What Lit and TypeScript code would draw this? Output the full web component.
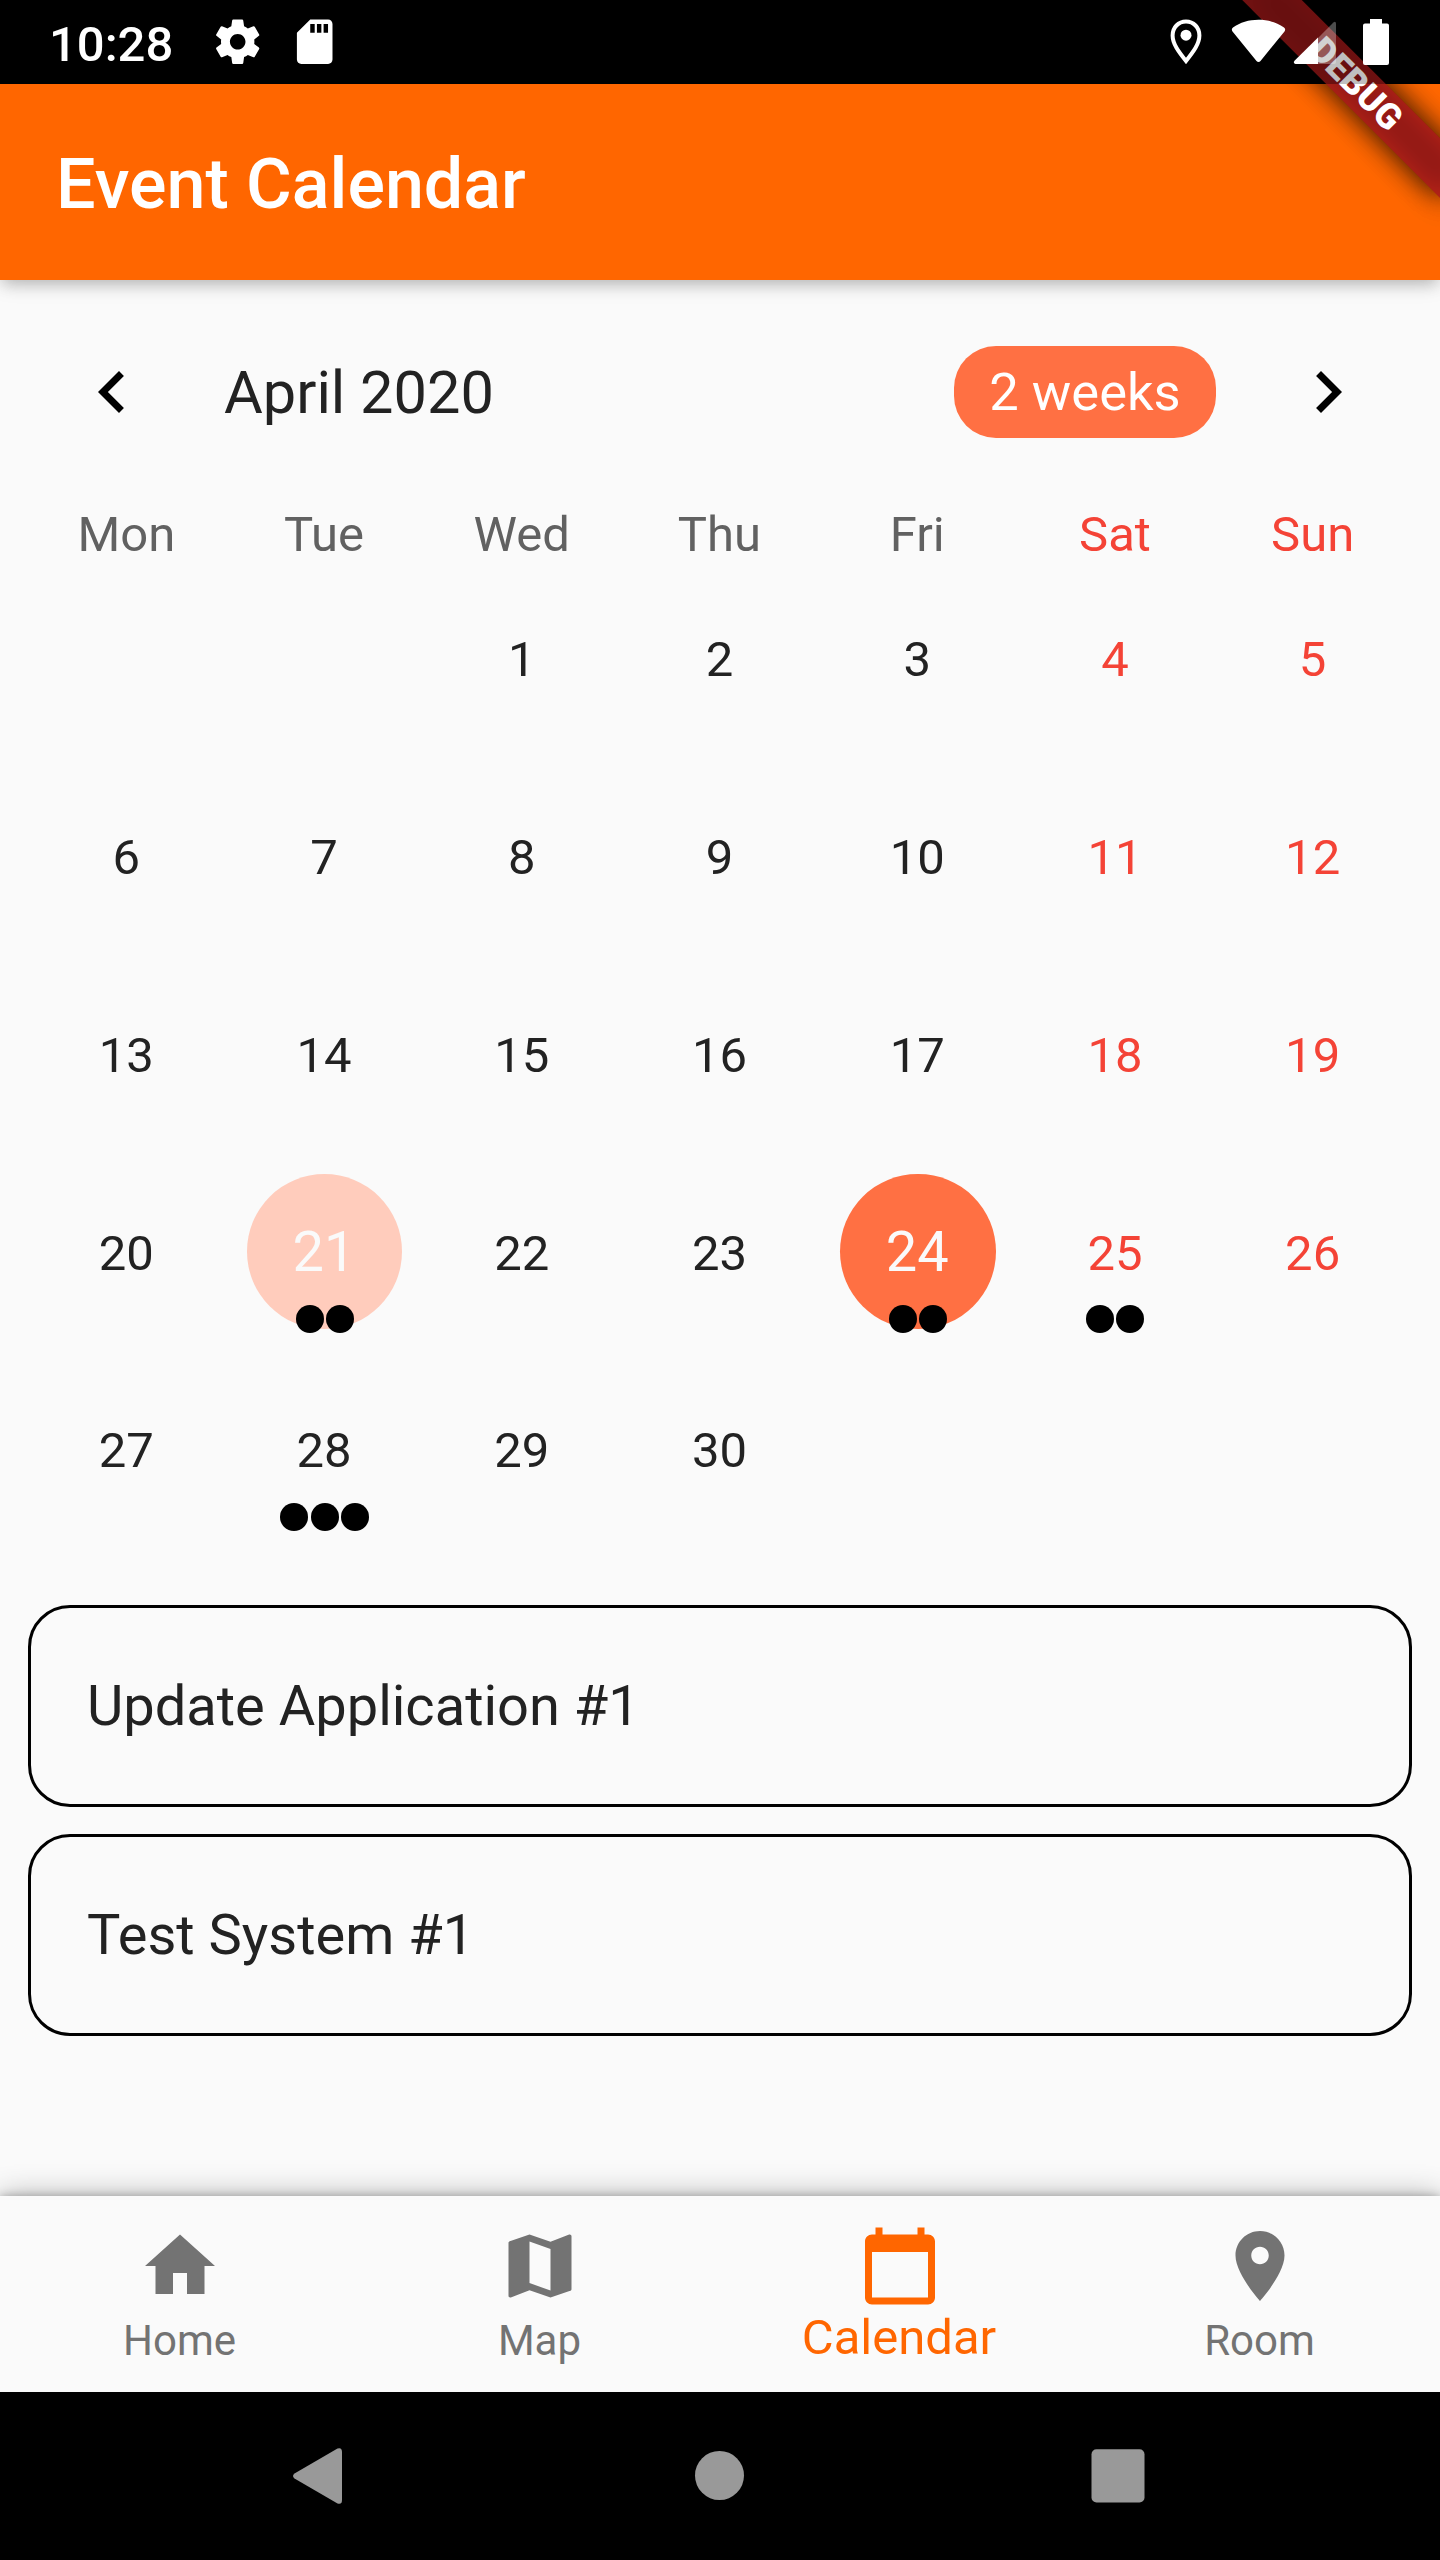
import { LitElement, html, css, svg } from "lit";
import { customElement, property } from "lit/decorators.js";
import { classMap } from "lit/directives/class-map.js";

const ICONS: Record<string, string> = {
  left: "M15.41 7.41L14 6l-6 6 6 6 1.41-1.41L10.83 12z",
  right: "M10 6L8.59 7.41 13.17 12l-4.58 4.59L10 18l6-6z",
  home: "M10 20v-6h4v6h5v-8h3L12 3 2 12h3v8z",
  map: "M20.5 3l-.16.03L15 5.1 9 3 3.36 4.9c-.21.07-.36.25-.36.48V20.5c0 .28.22.5.5.5l.16-.03L9 18.9l6 2.1 5.64-1.9c.21-.07.36-.25.36-.48V3.5c0-.28-.22-.5-.5-.5zM15 19l-6-2.11V5l6 2.11V19z",
  calendar: "M20 3h-1V1h-2v2H7V1H5v2H4c-1.1 0-2 .9-2 2v16c0 1.1.9 2 2 2h16c1.1 0 2-.9 2-2V5c0-1.1-.9-2-2-2zm0 18H4V8h16v13z",
  room: "M12 2C8.13 2 5 5.13 5 9c0 5.25 7 13 7 13s7-7.75 7-13c0-3.87-3.13-7-7-7zm0 9.5c-1.38 0-2.5-1.12-2.5-2.5s1.12-2.5 2.5-2.5 2.5 1.12 2.5 2.5-1.12 2.5-2.5 2.5z",
  settings: "M19.43 12.98c.04-.32.07-.64.07-.98s-.03-.66-.07-.98l2.11-1.65c.19-.15.24-.42.12-.64l-2-3.46c-.12-.22-.39-.3-.61-.22l-2.49 1c-.52-.4-1.08-.73-1.69-.98l-.38-2.65C14.46 2.18 14.25 2 14 2h-4c-.25 0-.46.18-.49.42l-.38 2.65c-.61.25-1.17.59-1.69.98l-2.49-1c-.23-.09-.49 0-.61.22l-2 3.46c-.13.22-.07.49.12.64l2.11 1.65c-.04.32-.07.65-.07.98s.03.66.07.98l-2.11 1.65c-.19.15-.24.42-.12.64l2 3.46c.12.22.39.3.61.22l2.49-1c.52.4 1.08.73 1.69.98l.38 2.65c.03.24.24.42.49.42h4c.25 0 .46-.18.49-.42l.38-2.65c.61-.25 1.17-.59 1.69-.98l2.49 1c.23.09.49 0 .61-.22l2-3.46c.12-.22.07-.49-.12-.64l-2.11-1.65zM12 15.5c-1.93 0-3.5-1.57-3.5-3.5s1.57-3.5 3.5-3.5 3.5 1.57 3.5 3.5-1.57 3.5-3.5 3.5z",
  sd: "M18 2h-8L4 8v12c0 1.1.9 2 2 2h12c1.1 0 2-.9 2-2V4c0-1.1-.9-2-2-2zm-6 6h-2V4h2v4zm3 0h-2V4h2v4zm3 0h-2V4h2v4z",
};

@customElement("md-icon")
class MdIcon extends LitElement {
  @property() name = "home";
  static styles = css`
    :host { display: block; width: 84px; height: 84px; }
    .glyph { display: block; width: 100%; height: 100%; fill: currentColor; }
  `;
  render() {
    return html`<svg class="glyph" viewBox="0 0 24 24"><path d=${ICONS[this.name]}></path></svg>`;
  }
}

@customElement("status-bar")
class StatusBar extends LitElement {
  static styles = css`
    :host {
      display: flex; height: 84px; box-sizing: border-box; flex: none;
      padding: 0 51px 0 49px; background: #000; color: #fff;
    }
    .left { display: flex; align-items: center; }
    .clock { font-size: 49px; font-weight: 500; line-height: 58px; width: 162px; padding-top: 5px; }
    .left md-icon { width: 53.4px; height: 53.4px; margin-right: 23.4px; }
  `;
  render() {
    return html`
      <div class="left">
        <span class="clock">10:28</span>
        <md-icon name="settings"></md-icon>
        <md-icon name="sd"></md-icon>
      </div>
    `;
  }
}

@customElement("signal-icons")
class SignalIcons extends LitElement {
  static styles = css`
    :host { display: block; width: 220px; height: 84px; }
    .art { display: block; }
  `;
  render() {
    return html`<svg class="art" width="220" height="84" viewBox="1170 0 220 84">
      ${svg`
        <path d="M1186 21.500c-7.600 0-13.400 6-13.400 14 0 8.500 6.200 16.500 13.400 25.500 7.200-9 13.400-17 13.400-25.500 0-8-5.800-14-13.400-14z" fill="none" stroke="#fff" stroke-width="4"></path>
        <circle cx="1186" cy="35.200" r="5.500" fill="#fff"></circle>
        <path d="M1258.500 19.800c-9.500 0-18.500 2.700-25.500 7.700-1.400 1-1.500 2.600-.5 3.900l24 29.600c1.100 1.300 2.900 1.300 4 0l24-29.600c1-1.300.9-2.900-.5-3.900-7-5-16-7.700-25.500-7.700z" fill="#fff"></path>
        <path d="M1318 40v24h16q2 0 2-2V23.500q-.3-3-2.600-1L1318 38z" fill="#fff" fill-opacity=".3"></path>
        <path d="M1318 37.500V64h-22.500c-1.800 0-2.200-2-1-3.200z" fill="#fff"></path>
        <path d="M1370 19h12v4.500h5q2 0 2 2V63q0 2-2 2h-22q-2 0-2-2V25.500q0-2 2-2h5z" fill="#fff"></path>
      `}
    </svg>`;
  }
}

@customElement("calendar-day")
class CalendarDay extends LitElement {
  @property({ type: Number }) day = 0;
  @property({ type: Number }) events = 0;
  @property() mark = "";
  @property({ type: Boolean }) weekend = false;
  static styles = css`
    :host { display: grid; position: relative; padding: 21px; box-sizing: border-box; }
    .disc {
      display: flex; align-items: center; justify-content: center; border-radius: 50%; box-sizing: border-box;
      font-size: 49px; line-height: 57px; color: #222; padding-top: 3px; padding-right: 1px;
    }
    .weekend { color: #f44336; }
    .today, .selected { color: #fafafa; font-size: 56px; padding-top: 2px; }
    .today { background: #ffccbc; }
    .selected { background: #ff7043; }
    .dots { position: absolute; left: 0; right: 0; bottom: 17.5px; display: flex; justify-content: center; gap: 2.1px; }
    .dot { width: 28px; height: 28px; border-radius: 50%; background: #000; }
  `;
  render() {
    const cls = { disc: true, weekend: this.weekend, today: this.mark === "today", selected: this.mark === "selected" };
    return html`
      <div class=${classMap(cls)}>${this.day || ""}</div>
      ${this.events
        ? html`<div class="dots">${Array.from({ length: this.events }, () => html`<span class="dot"></span>`)}</div>`
        : ""}
    `;
  }
}

@customElement("app-root")
class AppRoot extends LitElement {
  static styles = css`
    :host {
      display: flex; flex-direction: column; width: 1440px; height: 2560px; position: relative;
      overflow: hidden; background: #fafafa; color: #222; font-family: Roboto, sans-serif;
    }
    .appbar {
      height: 196px; flex: none; display: flex; align-items: center; padding: 4px 56px 0; box-sizing: border-box;
      background: #ff6600; color: #fff; font-size: 70px; font-weight: 500; line-height: 82px; z-index: 1;
      box-shadow: 0 7px 14px -3px rgba(0,0,0,.2), 0 3px 22px rgba(0,0,0,.12);
    }
    .body { flex: 1; display: flex; flex-direction: column; min-height: 0; }
    .head { display: flex; align-items: center; height: 84px; padding: 0 70px; margin-top: 70px; }
    .month { flex: 1; font-size: 59.5px; line-height: 70px; padding: 2px 0 0 70px; }
    .pill {
      width: 262px; height: 91.5px; border-radius: 42px; background: #ff7043; color: #fff; margin-right: 70px;
      display: flex; align-items: center; justify-content: center; font-size: 52.5px; line-height: 62px;
    }
    .arrow { color: #000; }
    .week { display: grid; grid-template-columns: repeat(7, 1fr); padding: 0 28px; }
    .names { margin-top: 70px; height: 55.6px; align-items: center; }
    .name { text-align: center; font-size: 49px; line-height: 57px; color: #616161; padding: 1.5px 1px 0 0; }
    .off { color: #f44336; }
    .days { grid-auto-rows: 197.71px; }
    .events { display: flex; flex-direction: column; gap: 27px; padding: 56.4px 28px 0; }
    .event {
      height: 202px; box-sizing: border-box; border: 3px solid #000; border-radius: 42px; padding: 0 56px;
      display: flex; align-items: center; font-size: 56px; line-height: 66px;
    }
    .tabs {
      height: 196px; flex: none; display: grid; grid-template-columns: repeat(4, 1fr); background: #fafafa;
      box-shadow: 0 0 28px rgba(0,0,0,.3), 0 0 9px rgba(0,0,0,.26);
    }
    .tab {
      display: flex; flex-direction: column; align-items: center; padding-top: 28px; color: #737373;
      font-size: 42px; line-height: 49px; gap: 8px;
    }
    .current { color: #ff6600; font-size: 49px; gap: 1px; line-height: 57px; }
    .label { padding-right: 1px; }
    .current .label { padding-right: 2px; }
    .system { height: 168px; flex: none; background: #000; }
    .banner { position: absolute; right: 0; top: 0; width: 420px; height: 420px; overflow: hidden; z-index: 2; }
    .shade, .ribbon {
      position: absolute; left: 195.9px; top: 63.1px; width: 280px; height: 42px; transform: rotate(45deg);
    }
    .shade { background: rgba(0,0,0,.5); filter: blur(14px); }
    .ribbon {
      background: rgba(183,28,28,.627); color: #fff; font-size: 35.7px; font-weight: 900; line-height: 42px;
      text-align: center;
    }
    .scrim { position: absolute; left: 0; right: 0; top: 0; height: 84px; background: rgba(0,0,0,.25); }
    .signals { position: absolute; right: 50px; top: 0; z-index: 3; }
  `;

  private dayCell(i: number) {
    const day = i - 1;
    const events: Record<number, number> = { 21: 2, 24: 2, 25: 2, 28: 3 };
    return html`<calendar-day
      .day=${day >= 1 && day <= 30 ? day : 0}
      .events=${events[day] ?? 0}
      .mark=${day === 21 ? "today" : day === 24 ? "selected" : ""}
      .weekend=${i % 7 >= 5}
    ></calendar-day>`;
  }

  render() {
    const names = ["Mon", "Tue", "Wed", "Thu", "Fri", "Sat", "Sun"];
    const tabs = [["home", "Home"], ["map", "Map"], ["calendar", "Calendar"], ["room", "Room"]];
    return html`
      <status-bar></status-bar>
      <header class="appbar">Event Calendar</header>
      <main class="body">
        <div class="head">
          <md-icon class="arrow" name="left"></md-icon>
          <span class="month">April 2020</span>
          <span class="pill">2 weeks</span>
          <md-icon class="arrow" name="right"></md-icon>
        </div>
        <div class="week names">
          ${names.map((n, i) => html`<span class=${classMap({ name: true, off: i > 4 })}>${n}</span>`)}
        </div>
        <div class="week days">${Array.from({ length: 35 }, (_, i) => this.dayCell(i))}</div>
        <div class="events">
          <div class="event">Update Application #1</div>
          <div class="event">Test System #1</div>
        </div>
      </main>
      <nav class="tabs">
        ${tabs.map(([icon, label]) => html`
          <div class=${classMap({ tab: true, current: icon === "calendar" })}>
            <md-icon name=${icon}></md-icon><span class="label">${label}</span>
          </div>`)}
      </nav>
      <footer class="system">
        <svg width="1440" height="168" viewBox="0 2392 1440 168" fill="#999">
          <path d="M337.500 2448.500L294.500 2473.500Q291.500 2476 294.500 2478.500L337.500 2503.500Q342 2505 342 2500V2452Q342 2447 337.500 2448.500z"></path>
          <circle cx="719.500" cy="2475.500" r="24.500"></circle>
          <rect x="1091.500" y="2449.300" width="53" height="53.200" rx="5"></rect>
        </svg>
      </footer>
      <div class="banner">
        <div class="shade"></div>
        <div class="ribbon"></div>
        <div class="shade"></div>
        <div class="ribbon">DEBUG</div>
        <div class="scrim"></div>
      </div>
      <signal-icons class="signals"></signal-icons>
    `;
  }
}
